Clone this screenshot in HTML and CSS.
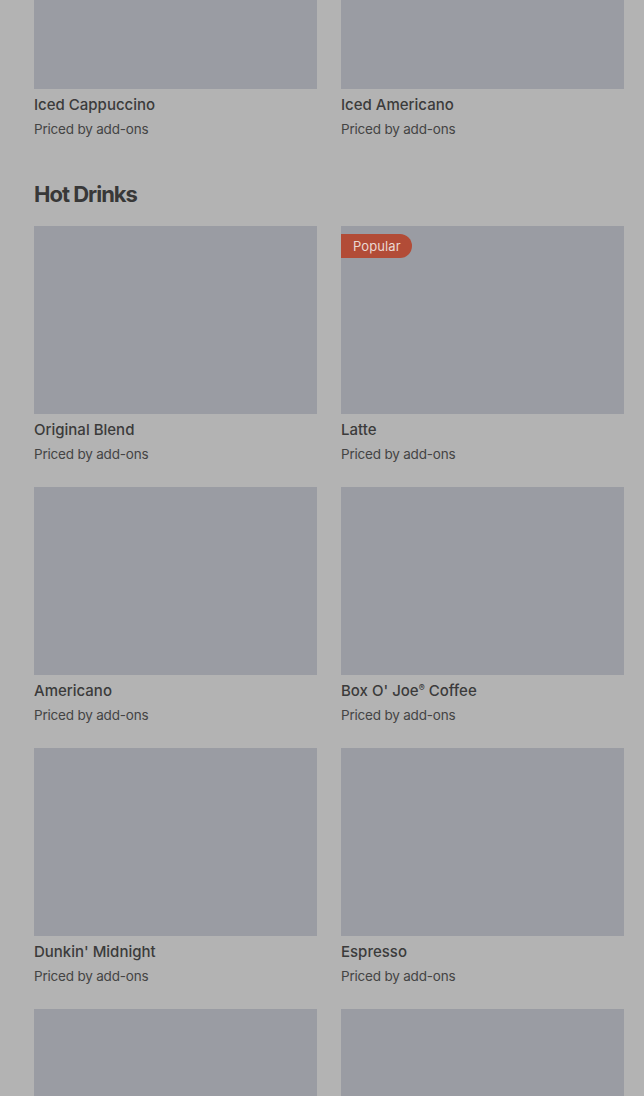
FILE: index.html
```html
<!DOCTYPE html>
<html>
  <head>
    <meta charset="utf-8"/>
    <link rel="stylesheet" href="styles.css">
  </head>
  <body>
    <div class="menu">
      <section class="category">
        <div class="grid">
          <div class="item">
            <div class="photo"></div>
            <div class="name">Iced Cappuccino</div>
            <div class="price">Priced by add-ons</div>
          </div>
          <div class="item">
            <div class="photo"></div>
            <div class="name">Iced Americano</div>
            <div class="price">Priced by add-ons</div>
          </div>
        </div>
      </section>

      <section class="category">
        <h2 class="title">Hot Drinks</h2>
        <div class="grid">
          <div class="item">
            <div class="photo"></div>
            <div class="name">Original Blend</div>
            <div class="price">Priced by add-ons</div>
          </div>
          <div class="item">
            <div class="photo"><span class="badge">Popular</span></div>
            <div class="name">Latte</div>
            <div class="price">Priced by add-ons</div>
          </div>
          <div class="item">
            <div class="photo"></div>
            <div class="name">Americano</div>
            <div class="price">Priced by add-ons</div>
          </div>
          <div class="item">
            <div class="photo"></div>
            <div class="name">Box O' Joe<sup>®</sup> Coffee</div>
            <div class="price">Priced by add-ons</div>
          </div>
          <div class="item">
            <div class="photo"></div>
            <div class="name">Dunkin' Midnight</div>
            <div class="price">Priced by add-ons</div>
          </div>
          <div class="item">
            <div class="photo"></div>
            <div class="name">Espresso</div>
            <div class="price">Priced by add-ons</div>
          </div>
          <div class="item">
            <div class="photo"></div>
          </div>
          <div class="item">
            <div class="photo"></div>
          </div>
        </div>
      </section>
    </div>
  </body>
</html>
```

FILE: styles.css
```css
html, body {
  margin: 0;
  height: 100%;
  overflow: hidden;
  background: #b3b3b3;
}
body {
  font-family: Inter, "Noto Sans", sans-serif;
  color: #3b3b3b;
}
.menu {
  margin-top: -99px;
  padding: 0 20px 0 34px;
}
.category {
  padding-bottom: 37px;
}
.title {
  margin: 0 0 16px;
  font-size: 22px;
  line-height: 32px;
  font-weight: 700;
  letter-spacing: -1px;
  color: #383838;
}
.grid {
  display: grid;
  grid-template-columns: 1fr 1fr;
  column-gap: 24px;
  row-gap: 21px;
}
.photo {
  position: relative;
  height: 188px;
  background: #9a9ca3;
}
.badge {
  position: absolute;
  top: 8px;
  left: 0;
  height: 24px;
  padding: 0 11px 0 12px;
  border-radius: 0 12px 12px 0;
  background: #b24c37;
  color: #ead8d2;
  font-size: 13px;
  line-height: 24px;
  letter-spacing: 0.1px;
}
.name {
  margin-top: 4px;
  font-size: 15px;
  line-height: 24px;
  font-weight: 500;
  letter-spacing: 0;
}
.name sup {
  font-size: 9px;
  vertical-align: 5px;
  line-height: 0;
}
.price {
  font-size: 13.5px;
  line-height: 24px;
  color: #444;
  letter-spacing: -0.2px;
}
```
